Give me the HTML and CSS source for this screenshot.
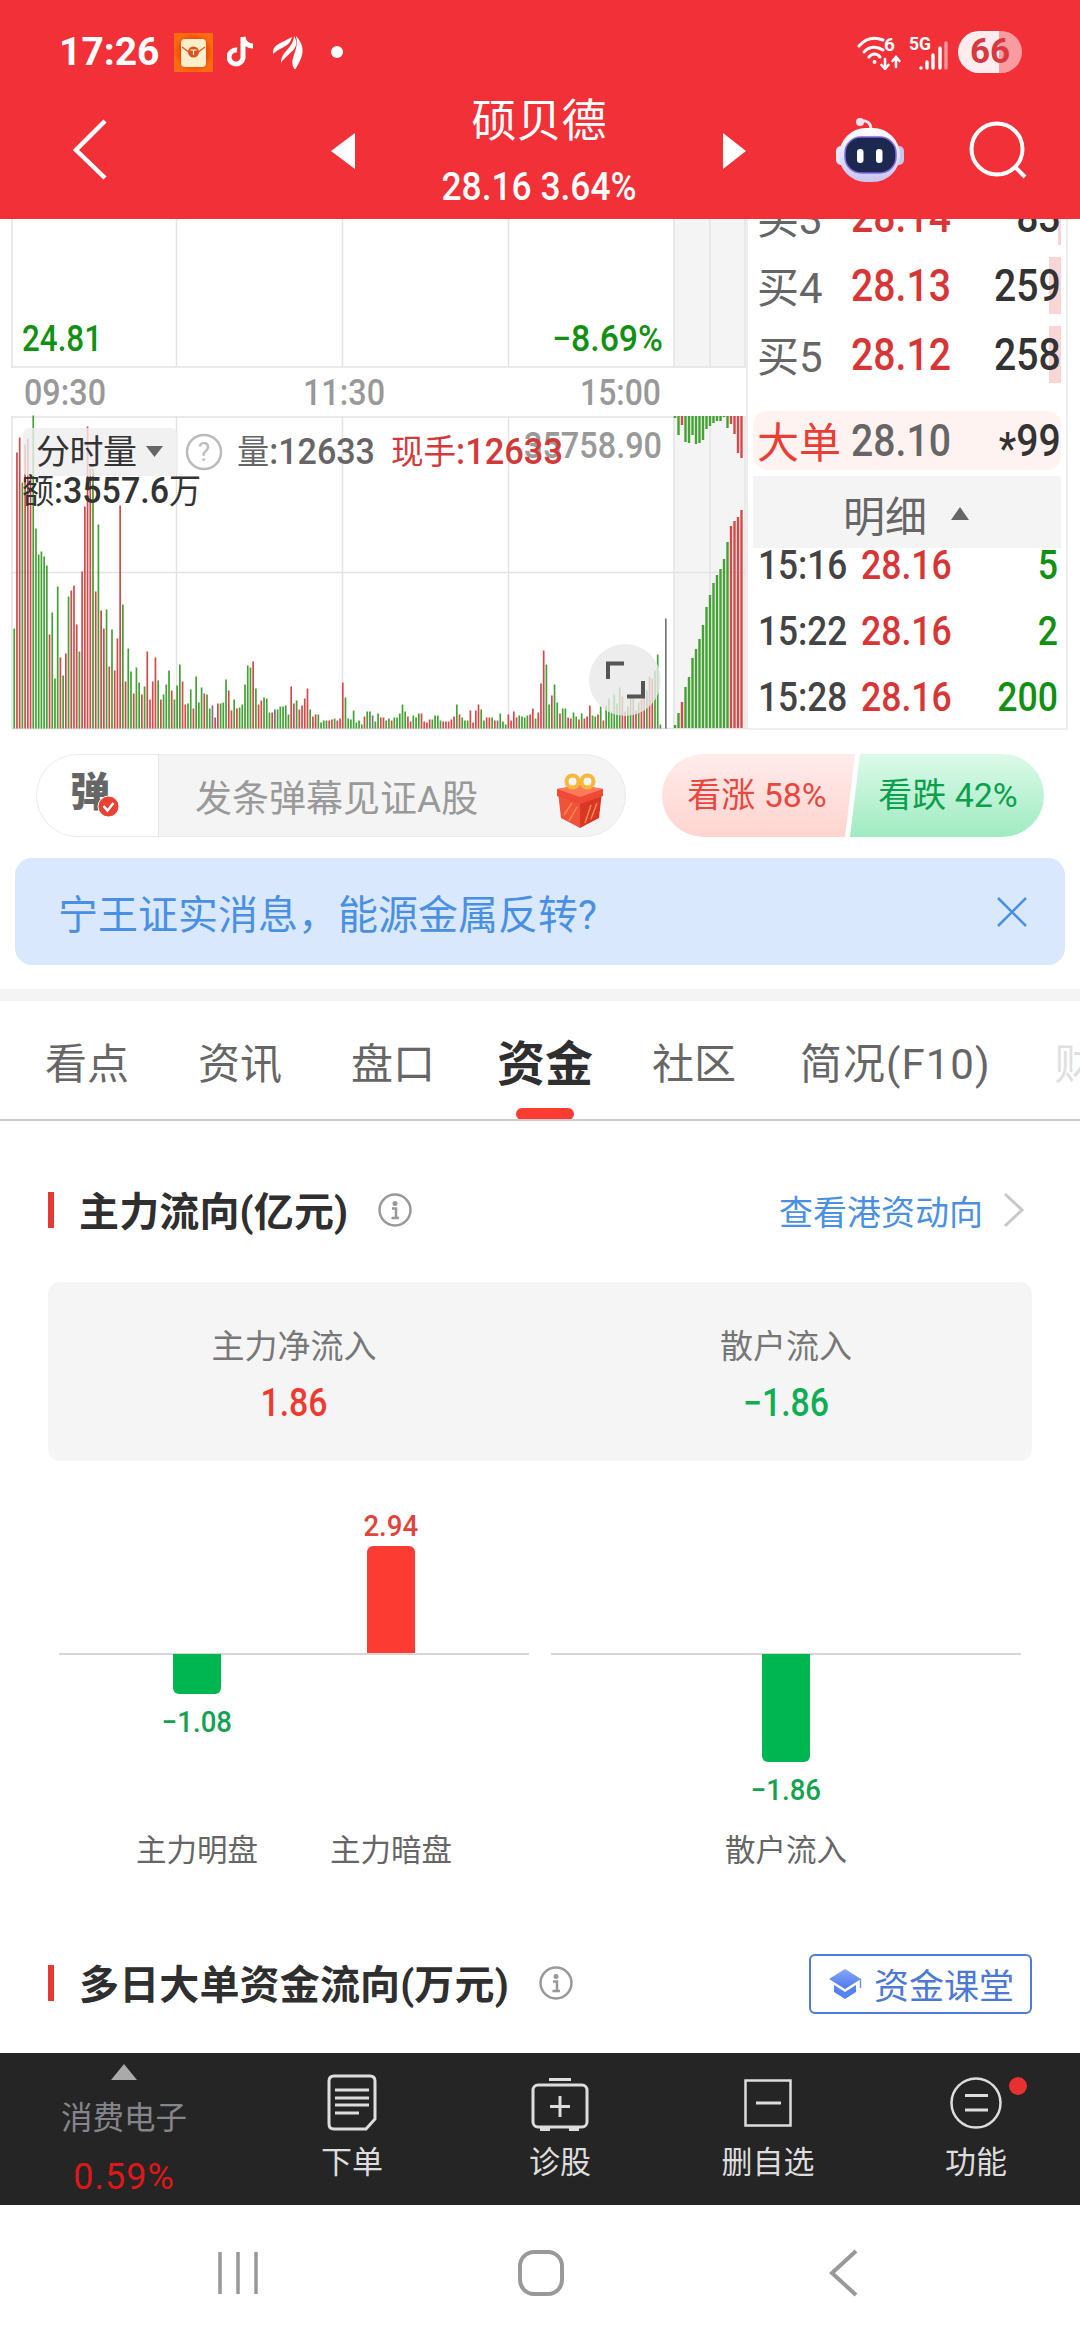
FILE: index.html
```
<!DOCTYPE html>
<html lang="zh-CN">
<head>
  <meta charset="UTF-8">
  <title>硕贝德</title>
  <link rel="stylesheet" href="styles.css">
</head>
<body>
  <header class="header">
    <div class="status">
      <span class="clock">17:26</span>
      <svg class="st-mail" width="39" height="39" viewBox="0 0 39 39">
        <defs>
          <radialGradient id="mailBg"><stop offset="0.5" stop-color="#e03c00"/><stop offset="1" stop-color="#ff6a10"/></radialGradient>
        </defs>
        <rect width="39" height="39" fill="url(#mailBg)"/>
        <rect x="7" y="6" width="25" height="28" rx="4" fill="#ffeecb"/>
        <path d="M8 14l8 6h7l8-6" fill="none" stroke="#e05a20" stroke-width="1.3"/>
        <circle cx="19.500" cy="19" r="5.500" fill="#d8541a"/>
        <path d="M16.500 17h6M19.500 17v5" stroke="#fff" stroke-width="1.200"/>
      </svg>
      <svg class="st-note" width="28" height="34" viewBox="0 0 28 34">
        <path d="M16 2v21a7 7 0 1 1-6-8M16 2c1 6 5 9 10 9" fill="none" stroke="#fff" stroke-width="5"/>
      </svg>
      <svg class="st-wing" width="30" height="34" viewBox="0 0 30 34" fill="#fff">
        <path d="M0 19C-1 9 9 8 19 2C17 12 7 12 0 19z"/>
        <path d="M8 28C8 16 20 14 21 1C29 14 14 18 8 28z"/>
        <path d="M22 35C14 24 27 17 23 1C35 14 28 24 22 35z"/>
      </svg>
      <i class="st-dot"></i>
      <div class="status-right">
        <svg width="92" height="36" viewBox="0 0 92 36" fill="none" stroke="#fff" stroke-width="3" stroke-linecap="round">
          <path d="M2 12C9 4 18 3 26 6M7 18c5-6 13-6 19-2M12 23c3-4 8-4 11 0"/>
          <circle cx="17.500" cy="28" r="1.200" fill="#fff" stroke-width="1.500"/>
          <path d="M28 25v9M24.500 31l3.500 4 3.500-4M39 33v-9M35.500 27l3.500-4 3.500 4" stroke-width="2.600"/>
          <path d="M64 34v0M70 28v6M76 21v13M83 14v20" stroke-width="3.400"/>
          <path d="M89 9v25" stroke-width="3.400" opacity=".5"/>
          <text class="st-text" x="27" y="17" font-size="19">6</text>
          <text class="st-text" x="52" y="16" font-size="18" textLength="22" lengthAdjust="spacingAndGlyphs">5G</text>
        </svg>
        <span class="battery">66</span>
      </div>
    </div>
    <div class="navbar">
      <svg class="back" width="38" height="62" viewBox="0 0 38 62"><path d="M34 2L5 31l29 28" fill="none" stroke="#fff" stroke-width="4.500"/></svg>
      <svg class="prev" width="24" height="36" viewBox="0 0 24 36"><path d="M24 0v36L0 18z" fill="#fff"/></svg>
      <div class="stock">
        <div class="stock-name">硕贝德</div>
        <div class="stock-price num">28.16 3.64%</div>
      </div>
      <svg class="next" width="24" height="36" viewBox="0 0 24 36"><path d="M0 0v36l23-18z" fill="#fff"/></svg>
      <svg class="robot" width="70" height="66" viewBox="0 0 70 66">
        <defs>
          <linearGradient id="headFill" x2="0" y2="1"><stop offset="0" stop-color="#fff"/><stop offset="1" stop-color="#c9c4f2"/></linearGradient>
        </defs>
        <path d="M25 4c6-1 11 1 11 9" fill="none" stroke="#f6e2ee" stroke-width="3"/>
        <circle cx="25" cy="5" r="4" fill="#f6e2ee"/>
        <rect x="1" y="29" width="10" height="19" rx="5" fill="#e9e8fb"/>
        <rect x="58" y="29" width="11" height="19" rx="5" fill="#c9c6ef"/>
        <rect x="4" y="11" width="61" height="54" rx="27" fill="url(#headFill)"/>
        <rect x="10" y="20" width="51" height="36" rx="16" fill="#1d2850" stroke="#7d6bd8" stroke-width="1.500"/>
        <rect x="22" y="32" width="6.500" height="14" rx="3" fill="#fff"/>
        <rect x="41" y="32" width="6.500" height="14" rx="3" fill="#fff"/>
      </svg>
      <svg class="search" width="58" height="60" viewBox="0 0 58 60" fill="none" stroke="#fff" stroke-width="4"><circle cx="28" cy="29" r="25.500"/><path d="M46 47l10 10"/></svg>
    </div>
  </header>

  <section class="quote">
    <svg class="chart" width="746" height="512" viewBox="0 219 746 512">
      <rect x="673" y="219" width="73" height="149" fill="#f4f4f4"/>
      <rect x="673" y="416" width="73" height="312" fill="#f4f4f4"/>
      <g stroke="#e3e3e3" stroke-width="1.500">
        <path d="M12 219V368M12 416V729M674 219V368M710 219V368M745 219V368M674 416V729M710 416V729M745 416V729"/>
        <path d="M176.500 219V367M342.500 219V367M508.500 219V367M176.500 416V729M342.500 416V729M508.500 416V729M11 572.500H746"/>
        <path d="M11 367H746M11 417H746M11 728.500H746"/>
      </g>
      <g id="volume"></g>
      <g id="auction"></g>
      <rect x="23" y="428" width="155" height="48" rx="6" fill="#eee" fill-opacity=".8"/>
      <g class="num chart-text">
        <text x="22" y="351" class="green" textLength="80" lengthAdjust="spacingAndGlyphs">24.81</text>
        <text x="552" y="351" class="green" textLength="111" lengthAdjust="spacingAndGlyphs">−8.69%</text>
        <g class="axis">
          <text x="24" y="405" textLength="82" lengthAdjust="spacingAndGlyphs">09:30</text>
          <text x="303" y="405" textLength="82" lengthAdjust="spacingAndGlyphs">11:30</text>
          <text x="580" y="405" textLength="81" lengthAdjust="spacingAndGlyphs">15:00</text>
          <text x="524" y="458" textLength="138" lengthAdjust="spacingAndGlyphs">35758.90</text>
        </g>
        <text x="36" y="464" class="dark cn" textLength="101">分时量</text>
        <text x="237" y="464" class="mid" textLength="138" lengthAdjust="spacingAndGlyphs"><tspan class="cn">量</tspan>:12633</text>
        <text x="391" y="464" class="red" textLength="172" lengthAdjust="spacingAndGlyphs"><tspan class="cn">现手</tspan>:12633</text>
        <text x="22" y="503" class="dark" textLength="179" lengthAdjust="spacingAndGlyphs"><tspan class="cn">额</tspan>:3557.6<tspan class="cn">万</tspan></text>
      </g>
      <path d="M146 446h17l-8.500 11z" fill="#666"/>
      <circle cx="204" cy="452" r="17" fill="none" stroke="#bbb" stroke-width="2.500"/>
      <text x="204" y="461" class="help" text-anchor="middle">?</text>
      <circle cx="625" cy="680" r="36" fill="#e8e8e8" fill-opacity=".8"/>
      <path d="M608 679v-15.500h16M643 681v15.500h-16" fill="none" stroke="#555" stroke-width="4"/>
    </svg>

    <div class="orders">
      <div class="buy-list">
        <div class="buy first"><span class="lv">买3</span><span class="num price">28.14</span><span class="num qty">83</span><i style="width:3px"></i></div>
        <div class="buy"><span class="lv">买4</span><span class="num price">28.13</span><span class="num qty">259</span><i style="width:12px"></i></div>
        <div class="buy"><span class="lv">买5</span><span class="num price">28.12</span><span class="num qty">258</span><i style="width:12px"></i></div>
      </div>
      <div class="big-order"><span class="lv">大单</span><span class="num price">28.10</span><span class="num qty"><span class="star">*</span>99</span></div>
      <div class="detail-head">明细<svg width="18" height="13" viewBox="0 0 18 13"><path d="M9 0l9 13H0z" fill="#666"/></svg></div>
      <div class="ticks num">
        <div class="tick"><span class="time">15:16</span><span class="price">28.16</span><span class="qty">5</span></div>
        <div class="tick"><span class="time">15:22</span><span class="price">28.16</span><span class="qty">2</span></div>
        <div class="tick"><span class="time">15:28</span><span class="price">28.16</span><span class="qty">200</span></div>
      </div>
    </div>
  </section>

  <section class="interact">
    <div class="danmu">
      <div class="danmu-switch">弹
        <svg width="23" height="23" viewBox="0 0 23 23"><circle cx="11.500" cy="11.500" r="10.500" fill="#ea4232" stroke="#fff" stroke-width="1"/><path d="M6.500 11l4 4.500 6-7.500" fill="none" stroke="#fff" stroke-width="2.500"/></svg>
      </div>
      <div class="danmu-input">
        <span>发条弹幕见证A股</span>
        <svg width="48" height="56" viewBox="0 0 48 56">
          <path d="M2 19l22 8v28L5 45z" fill="#f0533a"/>
          <path d="M46 19l-22 8v28l19-10z" fill="#d93626"/>
          <path d="M8 42l8-12M13 48l8-14M29 50l6-18M35 46l6-16" stroke="#f98a4a" stroke-width="1.500"/>
          <path d="M1 16l23-4 23 4v7l-23 8L1 23z" fill="#ee4a35"/>
          <path d="M1 16l23-4 23 4-23 8z" fill="#fb7a5a"/>
          <circle cx="16.500" cy="8.500" r="6" fill="none" stroke="#f5b83c" stroke-width="4"/>
          <circle cx="31.500" cy="8.500" r="6" fill="none" stroke="#f5b83c" stroke-width="4"/>
        </svg>
      </div>
    </div>
    <div class="vote">
      <svg class="vote-bg" width="382" height="83" viewBox="0 0 382 83">
        <defs>
          <linearGradient id="upFill" x2="0" y2="1"><stop offset="0" stop-color="#ffeceb"/><stop offset="1" stop-color="#ffd4d0"/></linearGradient>
          <linearGradient id="downFill" x2="0" y2="1"><stop offset="0" stop-color="#dcfae9"/><stop offset="1" stop-color="#a0ebc1"/></linearGradient>
        </defs>
        <path d="M41.500 0H193L183 83H41.500a41.500 41.500 0 0 1 0-83z" fill="url(#upFill)"/>
        <path d="M198 0h142.500a41.500 41.500 0 0 1 0 83H188z" fill="url(#downFill)"/>
      </svg>
      <span class="vote-up">看涨 58%</span>
      <span class="vote-down">看跌 42%</span>
    </div>
  </section>

  <div class="banner">
    <span>宁王证实消息，能源金属反转?</span>
    <svg width="30" height="30" viewBox="0 0 30 30"><path d="M1 1l28 28M29 1L1 29" stroke="#4a90e2" stroke-width="2.500"/></svg>
  </div>

  <nav class="tabs">
    <span>看点</span>
    <span>资讯</span>
    <span>盘口</span>
    <span class="active">资金</span>
    <span>社区</span>
    <span class="f10">简况(F10)</span>
    <span class="faded">财务</span>
  </nav>

  <section class="section">
    <div class="section-head">
      <i class="mark"></i>
      <h2>主力流向(亿元)</h2>
      <svg class="info" width="34" height="34" viewBox="0 0 34 34"><circle cx="17" cy="17" r="15.500" fill="none" stroke="#999" stroke-width="2.500"/><circle cx="17" cy="10.500" r="2.500" fill="#999"/><path d="M14 15.500h4v9M13.500 25h7.500" fill="none" stroke="#999" stroke-width="2.500"/></svg>
      <a class="more">查看港资动向<svg width="22" height="36" viewBox="0 0 22 36"><path d="M2 2l17 16L2 34" fill="none" stroke="#c8c8c8" stroke-width="3"/></svg></a>
    </div>
    <div class="card">
      <div><p>主力净流入</p><b class="num up">1.86</b></div>
      <div><p>散户流入</p><b class="num down">−1.86</b></div>
    </div>
    <div class="flow">
      <div class="flow-group">
        <div class="flow-col">
          <div class="above"></div>
          <div class="below"><i class="bar" style="height:40px"></i><span class="num">−1.08</span></div>
          <p>主力明盘</p>
        </div>
        <div class="flow-col">
          <div class="above"><span class="num">2.94</span><i class="bar" style="height:107px"></i></div>
          <div class="below"></div>
          <p>主力暗盘</p>
        </div>
      </div>
      <div class="flow-group single">
        <div class="flow-col">
          <div class="above"></div>
          <div class="below"><i class="bar" style="height:108px"></i><span class="num">−1.86</span></div>
          <p>散户流入</p>
        </div>
      </div>
    </div>
  </section>

  <section class="section multi-day">
    <div class="section-head">
      <i class="mark"></i>
      <h2>多日大单资金流向(万元)</h2>
      <svg class="info" width="34" height="34" viewBox="0 0 34 34"><circle cx="17" cy="17" r="15.500" fill="none" stroke="#999" stroke-width="2.500"/><circle cx="17" cy="10.500" r="2.500" fill="#999"/><path d="M14 15.500h4v9M13.500 25h7.500" fill="none" stroke="#999" stroke-width="2.500"/></svg>
      <a class="class-btn">
        <svg width="34" height="32" viewBox="0 0 34 32">
          <defs><linearGradient id="capFill" x2="0" y2="1"><stop offset="0" stop-color="#8aa9f5"/><stop offset="1" stop-color="#4a78f0"/></linearGradient></defs>
          <path d="M17 1l16 10-16 10L1 11z" fill="url(#capFill)"/>
          <path d="M6 17l11 7 11-7v7l-11 7-11-7z" fill="#5583f2"/>
          <path d="M32.500 11v9" stroke="#6f96f4" stroke-width="1.500"/>
        </svg>资金课堂</a>
    </div>
  </section>

  <footer class="toolbar">
    <div class="sector">
      <svg width="26" height="16" viewBox="0 0 26 16"><path d="M13 0l13 16H0z" fill="#aaa"/></svg>
      <span>消费电子</span>
      <b>0.59%</b>
    </div>
    <div class="tool">
      <svg width="60" height="60" viewBox="0 0 60 60" fill="none" stroke="#ddd" stroke-width="3"><path d="M12 4h36q5 0 5 5v38l-9 10H12q-5 0-5-5V9q0-5 5-5zM13 18h34M13 26h34M13 33h34M13 41h24"/></svg>
      <span>下单</span>
    </div>
    <div class="tool">
      <svg width="60" height="60" viewBox="0 0 60 60" fill="none" stroke="#ddd" stroke-width="3"><rect x="3" y="13" width="54" height="42" rx="5"/><path d="M19 7.500h22M30 24v21M20 34.500h20M10 57.500h10M39 57.500h10"/></svg>
      <span>诊股</span>
    </div>
    <div class="tool">
      <svg width="60" height="60" viewBox="0 0 60 60" fill="none" stroke="#ddd" stroke-width="2.500"><rect x="7.500" y="8.500" width="45" height="45"/><path d="M18 31h25" stroke-width="3"/></svg>
      <span>删自选</span>
    </div>
    <div class="tool">
      <svg width="60" height="60" viewBox="0 0 60 60" fill="none" stroke="#ddd" stroke-width="2.500"><circle cx="30" cy="31" r="24.500"/><path d="M19 23.500h23M19 38h23" stroke-width="3"/></svg>
      <span>功能</span>
      <i class="dot"></i>
    </div>
  </footer>

  <div class="sysnav">
    <svg width="44" height="46" viewBox="0 0 44 46" stroke="#999" stroke-width="3.500"><path d="M4 2v42M22 2v42M40 2v42"/></svg>
    <svg width="48" height="48" viewBox="0 0 48 48"><rect x="3" y="3" width="42" height="42" rx="14" fill="none" stroke="#999" stroke-width="4"/></svg>
    <svg width="36" height="48" viewBox="-6 0 36 48"><path d="M28 2L4 24l24 22" fill="none" stroke="#999" stroke-width="4"/></svg>
  </div>

  <script src="chart.js"></script>
</body>
</html>
```
FILE: chart.js
```
// g = green, r = red, k = flat; the number is the bar height
const volume = `g100 r276 r291 g246 r284 r290 r254 g313 g200 g174 g177 g172 g163 r94 g116 g50 g142 r71 g53 r75
g132 r138 r143 r104 g77 r157 r222 r302 r260 g260 r137 g204 r118 r100 g119 r62 g99 r58 r90 r223
g124 r47 g80 g57 r35 g61 g46 r34 g42 r77 r29 r47 r71 g48 r29 g34 g44 g58 r38 g29
g43 g64 r47 r24 g25 g39 r20 g52 g26 g41 r35 g34 g20 k23 r11 r25 g25 g26 g49 r38
r18 g29 r20 g21 g24 g44 g63 g61 r67 g40 r24 r28 g31 g30 g16 r16 k19 g19 g22 g22
g23 g14 r42 r25 g28 r19 r23 r30 r40 g19 r12 r14 g14 g6 g8 g8 r8 r9 g10 r8
r10 r46 g31 g10 g9 g18 g6 g8 g4 r12 g17 g17 k13 g7 g15 r11 r11 g8 g10 r8
g11 g11 g15 g24 g17 r12 r7 g13 g11 g15 r15 r7 r6 r9 g9 g13 g13 g8 r7 r7
r7 r9 r12 g24 r14 g11 g8 g8 r18 r6 r18 r24 g19 g8 r11 r11 g11 r8 k8 g15
g7 g4 r14 r8 r17 r11 g13 g12 g11 g13 r14 r20 g10 r16 r45 r78 g64 g24 r33 g44
g26 r15 g20 g20 r11 r10 g16 g12 r9 g15 r10 r12 r23 g13 g12 r14 g22 r8 g23 g30
g17 g34 g25 g41 r32 r17 g22 g34 r30 r18 g26 r29 r34 g38 r52 r50 g58 g74 k4 k0 k110`.split(/\s+/);

const matched = "g3 g15 r26 g41 g51 g70 g79 g89 g103 g121 g133 g145 g153 g159 g169 g186 r202 r207 r211 r218".split(" ");
const unmatched = [2, 19, 9, 26, 27, 19, 28, 27, 24, 13, 10, 7, 5, 5, 1, 12, 8, 18, 37, 42];

const colors = { g: "#45a035", r: "#d24a4a", k: "#777" };

function addBar(group, x, y, w, h, color) {
  const rect = document.createElementNS("http://www.w3.org/2000/svg", "rect");
  rect.setAttribute("x", x);
  rect.setAttribute("y", y);
  rect.setAttribute("width", w);
  rect.setAttribute("height", h);
  rect.setAttribute("fill", color);
  group.appendChild(rect);
}

const volumeGroup = document.getElementById("volume");
volume.forEach((item, i) => {
  const h = Number(item.slice(1));
  addBar(volumeGroup, 13.4 + i * 2.715, 728.5 - h, 1.7, h, colors[item[0]]);
});

const auctionGroup = document.getElementById("auction");
matched.forEach((item, i) => {
  const h = Number(item.slice(1));
  const x = 673.8 + i * 3.5;
  addBar(auctionGroup, x, 728 - h, 2.4, h, colors[item[0]]);
  addBar(auctionGroup, x, 416, 2.4, unmatched[i], colors[item[0]]);
});
```
FILE: styles.css
```
* {
  box-sizing: border-box;
}

body {
  margin: 0;
  width: 1080px;
  height: 2340px;
  overflow: hidden;
  display: flex;
  flex-direction: column;
  background: #fff;
  color: #666;
  font-family: Roboto, "Noto Sans CJK SC", sans-serif;
}

p, h2 {
  margin: 0;
}

i {
  display: block;
}

svg {
  display: block;
  flex: none;
}

.num {
  font-weight: 500;
}

.green { fill: #119011; }
.red { fill: #d23a3a; }
.dark { fill: #333; }
.mid { fill: #666; }
.up { color: #ee3b32; }
.down { color: #0fae55; }

/* header */
.header {
  height: 219px;
  background: #f13038;
  color: #fff;
}

.status {
  display: flex;
  align-items: center;
  height: 104px;
  padding: 0 58px 0 59px;
}

.clock {
  width: 98px;
  font-size: 39px;
  font-weight: 700;
  white-space: nowrap;
}

.st-mail { margin-left: 17px; }
.st-note { margin-left: 14px; }
.st-wing { margin-left: 18px; }

.st-dot {
  width: 12px;
  height: 12px;
  margin-left: 28px;
  border-radius: 50%;
  background: #fff;
}

.status-right {
  display: flex;
  align-items: center;
  gap: 9px;
  margin-left: auto;
}

.st-text {
  fill: #fff;
  stroke: none;
  font-weight: 700;
}

.battery {
  width: 64px;
  height: 42px;
  border-radius: 21px;
  background: linear-gradient(90deg, #ffecee 41px, #fa9ba0 41px);
  color: #d83840;
  font-size: 35px;
  font-weight: 700;
  line-height: 42px;
  text-align: center;
}

.navbar {
  display: flex;
  align-items: center;
  height: 115px;
  padding: 0 53px 0 71px;
}

.back { margin-top: -23px; }
.prev, .next { margin-top: -21px; }
.prev { margin-left: 222px; }

.stock {
  width: 368px;
  height: 115px;
  text-align: center;
}

.stock-name {
  height: 44px;
  margin-top: -4px;
  font-size: 45px;
  line-height: 44px;
}

.stock-price {
  margin-top: 18px;
  font-size: 38px;
  line-height: 50px;
  transform: scaleX(.93);
}

.robot {
  margin: -24px 0 0 88px;
}

.search {
  margin: -24px 0 0 auto;
}

/* quote */
.quote {
  display: flex;
  height: 512px;
}

.chart-text {
  font-size: 36px;
}

.chart-text .cn {
  font-size: 34px;
  font-weight: 400;
}

.axis { fill: #999; }

.help {
  fill: #bbb;
  font-size: 26px;
}

.orders {
  width: 322px;
  height: 511px;
  padding: 0 5px;
  border: solid #eee;
  border-width: 0 2px 2px;
  overflow: hidden;
}

.buy-list {
  display: flex;
  flex-direction: column;
  height: 192px;
}

.buy {
  display: flex;
  flex: none;
  align-items: center;
  position: relative;
  height: 69px;
  padding-left: 4px;
  font-size: 44px;
}

.buy.first { margin-top: -37px; }

.buy i {
  position: absolute;
  right: 0;
  top: 6px;
  height: 57px;
  background: #f9d5d6;
}

.lv {
  width: 94px;
  padding-bottom: 3px;
  font-size: 42px;
  white-space: nowrap;
}

.price {
  color: #d83636;
  transform: scaleX(.89);
  transform-origin: left;
}

.qty {
  flex: 1;
  position: relative;
  z-index: 1;
  color: #333;
  text-align: right;
  transform: scaleX(.89);
  transform-origin: right;
}

.star {
  position: relative;
  top: 8px;
}

.big-order {
  display: flex;
  align-items: center;
  height: 59px;
  padding-left: 4px;
  border-radius: 14px;
  background: #fff3f2;
  font-size: 44px;
}

.big-order .lv { color: #ea3d36; }
.big-order .price { color: #666; }

.detail-head {
  display: flex;
  align-items: center;
  justify-content: center;
  gap: 24px;
  height: 72px;
  margin-top: 6px;
  padding: 3px 2px 0 0;
  background: #f4f4f4;
  font-size: 42px;
}

.ticks {
  margin-top: -16px;
  font-size: 40px;
}

.tick {
  display: flex;
  align-items: center;
  height: 66px;
  padding: 0 3px 0 5px;
  color: #444;
}

.time {
  width: 103px;
  transform: scaleX(.88);
  transform-origin: left;
}

.tick .qty { color: #119011; }

/* danmu + vote */
.interact {
  display: flex;
  justify-content: space-between;
  padding: 23px 36px 0;
}

.danmu {
  display: flex;
  width: 590px;
  height: 83px;
  border: 1px solid #eaeaea;
  border-radius: 42px;
  background: #f4f4f4;
  overflow: hidden;
}

.danmu-switch {
  position: relative;
  width: 122px;
  padding-left: 33px;
  border-right: 1px solid #e6e6e6;
  background: #fff;
  font-size: 40px;
  font-weight: 900;
  line-height: 76px;
}

.danmu-switch svg {
  position: absolute;
  left: 60px;
  top: 40px;
}

.danmu-input {
  display: flex;
  flex: 1;
  align-items: center;
  justify-content: space-between;
  padding: 0 21px 0 36px;
  color: #999;
  font-size: 37px;
}

.danmu-input svg { margin-top: 10px; }

.vote {
  display: grid;
  grid-template-columns: 190px 192px;
  position: relative;
  width: 382px;
  height: 83px;
  font-size: 34px;
  line-height: 83px;
  text-align: center;
}

.vote-bg {
  position: absolute;
  left: 0;
  top: 0;
}

.vote span { position: relative; }
.vote-up { color: #e9483e; }
.vote-down { color: #0ca04d; }

.banner {
  display: flex;
  align-items: center;
  justify-content: space-between;
  height: 107px;
  margin: 21px 15px 24px;
  padding: 0 38px 0 43px;
  border-radius: 17px;
  background: #d9e8fc;
  color: #4a90e2;
  font-size: 40px;
}

/* tabs */
.tabs {
  display: flex;
  align-items: center;
  gap: 69px;
  flex: none;
  height: 132px;
  padding-left: 45px;
  border-top: 12px solid #f4f4f4;
  border-bottom: 2px solid #ccc;
  font-size: 42px;
  white-space: nowrap;
  overflow: hidden;
}

.tabs span {
  line-height: 118px;
  padding-top: 9px;
}

.tabs .active {
  position: relative;
  margin: 0 -10px 0 -7px;
  color: #2f2f2f;
  font-size: 48px;
  font-weight: 700;
}

.tabs .active::after {
  content: "";
  position: absolute;
  left: 19px;
  bottom: 4px;
  width: 58px;
  height: 12px;
  border-radius: 6px;
  background: #fc3b32;
}

.tabs .f10 {
  margin: 0 -5px 0 -5px;
  letter-spacing: 1px;
}

.tabs .faded { opacity: .2; }

/* sections */
.section {
  padding: 71px 48px 0;
}

.section-head {
  display: flex;
  align-items: center;
  height: 36px;
}

.mark {
  width: 6px;
  height: 36px;
  background: #e53935;
}

.section h2 {
  margin-left: 25px;
  padding-top: 6px;
  color: #2f2f2f;
  font-size: 40px;
  font-weight: 700;
  line-height: 40px;
  letter-spacing: .15px;
}

.info { margin-left: 30px; }

.more {
  display: flex;
  align-items: center;
  gap: 20px;
  margin-left: auto;
  padding-right: 7px;
  color: #4a90e2;
  font-size: 34px;
}

.card {
  display: grid;
  grid-template-columns: 1fr 1fr;
  height: 179px;
  margin-top: 54px;
  padding-top: 41px;
  border-radius: 12px;
  background: #f5f5f5;
  color: #777;
  text-align: center;
}

.card p {
  font-size: 33px;
  line-height: 48px;
}

.card b {
  display: block;
  font-size: 38px;
  line-height: 64px;
  transform: scaleX(.89);
}

.flow {
  display: flex;
  gap: 22px;
  margin-top: 39px;
  padding: 0 11px;
}

.flow-group {
  display: flex;
  width: 470px;
  padding-left: 41px;
  background: linear-gradient(#d6d6d6, #d6d6d6) 0 153px / 100% 2px no-repeat;
}

.flow-group.single {
  justify-content: center;
  padding-left: 0;
}

.flow-col {
  width: 194px;
  font-size: 30.5px;
  text-align: center;
}

.above, .below {
  display: flex;
  flex-direction: column;
  align-items: center;
  font-size: 29px;
}

.flow .num { transform: scaleX(.95); }

.above {
  justify-content: flex-end;
  height: 153px;
  color: #e0443a;
}

.below {
  height: 172px;
  margin-top: 1px;
  color: #14a251;
}

.bar {
  width: 48px;
}

.above .bar {
  margin-top: 3px;
  border-radius: 6px 6px 0 0;
  background: #fc3b32;
}

.below .bar {
  margin-bottom: 11px;
  border-radius: 0 0 6px 6px;
  background: #00b650;
}

.multi-day { padding-top: 95px; }

.class-btn {
  display: flex;
  align-items: center;
  gap: 12px;
  width: 223px;
  height: 60px;
  margin: 1px 0 0 auto;
  padding-left: 17px;
  border: 2px solid #5079d8;
  border-radius: 6px;
  color: #4e78d6;
  font-size: 35px;
}

/* bottom bars */
.toolbar {
  display: grid;
  grid-template-columns: 248px repeat(4, 208px);
  flex: none;
  height: 152px;
  margin-top: auto;
  background: #252525;
  color: #ddd;
  font-size: 31px;
}

.sector {
  display: flex;
  flex-direction: column;
  align-items: center;
  padding-top: 11px;
  color: #85858c;
}

.sector span {
  margin-top: 16px;
  font-size: 31.5px;
  line-height: 46px;
}

.sector b {
  margin-top: 14px;
  color: #dc1818;
  font-size: 36px;
  font-weight: 400;
  letter-spacing: 1px;
  line-height: 42px;
}

.tool {
  display: flex;
  flex-direction: column;
  align-items: center;
  position: relative;
  padding-top: 19px;
}

.tool span {
  margin-top: 8px;
  line-height: 46px;
}

.dot {
  position: absolute;
  left: 137px;
  top: 24px;
  width: 18px;
  height: 18px;
  border-radius: 50%;
  background: #e93030;
}

.sysnav {
  display: flex;
  justify-content: space-between;
  align-items: center;
  flex: none;
  height: 135px;
  padding: 0 222px 0 216px;
}
```
